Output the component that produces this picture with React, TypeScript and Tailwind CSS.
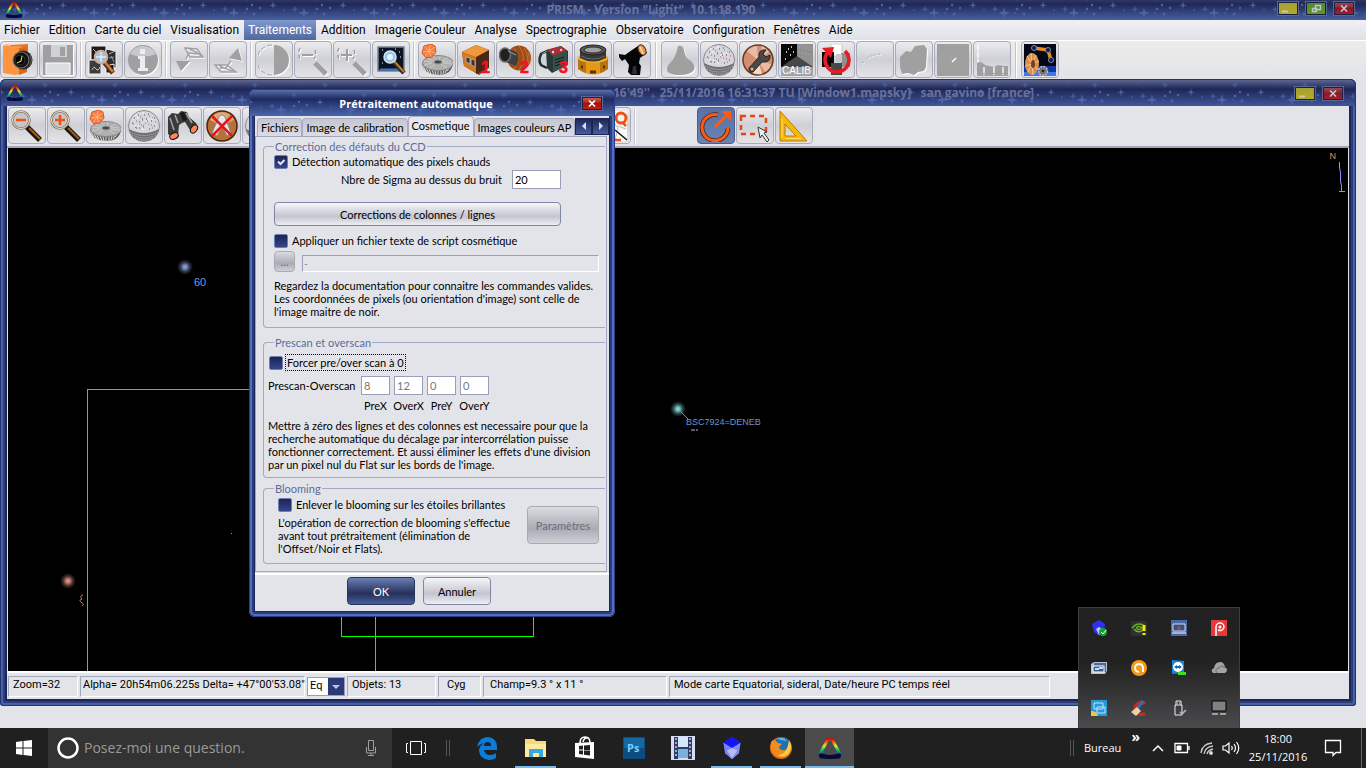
import React, { useState } from "react";
import type { ReactNode } from "react";

const menus = [
  "Fichier", "Edition", "Carte du ciel", "Visualisation", "Traitements", "Addition", "Imagerie Couleur",
  "Analyse", "Spectrographie", "Observatoire", "Configuration", "Fenêtres", "Aide",
];

const GREY = "drop-shadow-[1px_1px_0_#ffffff]";

/* ---------- shared bits ---------- */

function StarField({ id, x = 7, y = 7 }: { id: string; x?: number; y?: number }) {
  return (
    <svg className="pointer-events-none absolute inset-0 h-full w-full" aria-hidden="true">
      <defs>
        <pattern id={id} x={x} y={y - 7} width="70" height="40" patternUnits="userSpaceOnUse">
          <g fill="#4c62a6">
            <path d="M24 14l1 4.500 4.500 1.500-4.500 1.500-1 4.500-1-4.500-4.500-1.500 4.500-1.500z" />
            <path d="M15 12.500l.8 3 3 .8-3 .8-.8 3-.8-3-3-.8 3-.8z" opacity=".8" />
            <path d="M63 8.500l.8 3 3 .8-3 .8-.8 3-.8-3-3-.8 3-.8z" />
            <path d="M37 1l.8 3 3 .8-3 .8-.8 3-.8-3-3-.8 3-.8z" opacity=".8" />
            <circle cx="42" cy="12" r="1.200" />
            <circle cx="37" cy="16" r="1.300" />
            <circle cx="50" cy="15" r="1.200" />
            <circle cx="44" cy="21" r="1.500" />
            <circle cx="35" cy="20" r="1" opacity=".6" />
            <circle cx="4" cy="17" r="1" opacity=".6" />
            <circle cx="56" cy="20" r=".7" opacity=".5" />
            <circle cx="10" cy="4" r=".8" opacity=".6" />
          </g>
        </pattern>
      </defs>
      <rect width="100%" height="100%" fill={`url(#${id})`} />
    </svg>
  );
}

function PrismLogo({ id, className }: { id: string; className: string }) {
  return (
    <svg viewBox="0 0 24 22" className={className} aria-hidden="true">
      <defs>
        <linearGradient id={id} x1="0" y1="0" x2="0" y2="1">
          <stop offset="0" stopColor="#d01010" />
          <stop offset=".2" stopColor="#f07010" />
          <stop offset=".38" stopColor="#e8e820" />
          <stop offset=".58" stopColor="#20c860" />
          <stop offset=".76" stopColor="#1478a0" />
          <stop offset="1" stopColor="#08083c" />
        </linearGradient>
      </defs>
      <path d="M10 2h4l8 15-1 3H3l-1-3z" fill="none" stroke={`url(#${id})`} strokeWidth="3" strokeLinejoin="round" />
      <path d="M3 18.500q9 3 18 0" fill="none" stroke="#070a38" strokeWidth="4" strokeLinecap="round" />
    </svg>
  );
}

function WinButton({ kind, active }: { kind: "min" | "max" | "close"; active?: boolean }) {
  const face =
    kind === "min"
      ? "from-[#a4a03a] to-[#b4ac18]"
      : kind === "max"
        ? "from-[#4c8a3a] to-[#5f9a18]"
        : active
          ? "from-[#c65a50] via-[#a81008] to-[#c02018]"
          : "from-[#94485a] via-[#8c1828] to-[#a02028]";
  const label = kind === "min" ? "Réduire" : kind === "max" ? "Restaurer" : "Fermer";
  return (
    <button aria-label={label} className={`flex h-[13px] w-5 items-center justify-center border border-[#1b2144] bg-linear-to-b outline outline-[#5a6796] ${face}`}>
      <svg viewBox="0 0 18 11" className="h-[11px] w-[18px]" fill="none" stroke={active ? "#fff" : "#c4c4cc"} aria-hidden="true">
        {kind === "min" && <path d="M3 8.500h6" strokeWidth="2" />}
        {kind === "max" && <path d="M8.500 2.500h5v4h-5zM5.500 5.500h4v3h-4z" strokeWidth="1.400" />}
        {kind === "close" && <path d="M6 2.500l6 6M12 2.500l-6 6" strokeWidth="1.700" />}
      </svg>
    </button>
  );
}

function ToolButton({ name, icon, active }: { name: string; icon: ReactNode; active?: boolean }) {
  const face = active
    ? "border-[#4c5c8c] from-[#5870a4] to-[#6c82b0]"
    : "border-[#a9abbb] from-[#ececef] via-[#cfd0d6] to-[#e4e4e8]";
  return (
    <button aria-label={name} className={`flex h-[37px] w-[38px] shrink-0 items-center justify-center rounded border bg-linear-to-b ${face}`}>
      {icon}
    </button>
  );
}

function Sep({ wide }: { wide?: boolean }) {
  return (
    <div className={`flex shrink-0 items-center justify-center ${wide ? "w-2" : "w-1.5"}`}>
      <div className="h-9 w-0.5 border-l border-[#c4c4cc] bg-white" />
    </div>
  );
}

function Ico({ children, className = "" }: { children: ReactNode; className?: string }) {
  return (
    <svg viewBox="1 1 32 32" className={`h-8 w-8 ${className}`} fill="none" aria-hidden="true">
      {children}
    </svg>
  );
}

/* ---------- toolbar drawings ---------- */

const OpenIcon = () => (
  <Ico>
    <path d="M8 2l18-1v24l-14 6z" fill="#e07828" />
    <path d="M1 2l6-1v28l-6-1z" fill="#ffb070" />
    <path d="M1 3h17l3 2v25l-8 2L1 30z" fill="#ff9440" />
    <path d="M17 5v27l8-3V4z" fill="#d86818" />
    <circle cx="21" cy="17" r="9.500" fill="#242424" />
    <circle cx="19" cy="17" r="8" fill="#111" stroke="#707070" strokeWidth="1.200" />
    <circle cx="18" cy="17" r="5" fill="#000" stroke="#383838" />
    <path d="M15 20l4-2 1-5" stroke="#c8d060" strokeWidth="1.200" />
    <path d="M28 11q3 6 0 12" stroke="#666" />
  </Ico>
);

const SaveIcon = () => (
  <Ico className={GREY}>
    <path d="M2 2h30v30H2z" fill="#a0a0a0" />
    <path d="M10 2h16v12H10z" fill="#d0d1d6" />
    <path d="M19 4h5v9h-5z" fill="#a0a0a0" />
    <path d="M5 20h24v11H5z" fill="#dcdde1" stroke="#fff" />
  </Ico>
);

const ImagesIcon = () => (
  <Ico>
    <path d="M4 3h15v14H4z" fill="#1c1c1c" stroke="#f4f4f4" />
    <path d="M19 6l10 2v17H18z" fill="#2c2c2c" stroke="#f4f4f4" />
    <path d="M2 17h12v14H2z" fill="#3c3c3c" stroke="#f4f4f4" />
    <path d="M19 23l8-2v9h-8z" fill="#111" stroke="#f4f4f4" />
    <path d="M5 27q2-5 4-1 2 3 4-2M6 6l4 4M22 11l6-3" stroke="#bbb" />
    <path d="M24 13l3 6M22 15l5-1" stroke="#999" />
    <path d="M17 19l9 11" stroke="#432" strokeWidth="5" />
    <path d="M17 18l9 11" stroke="#e47a20" strokeWidth="2.500" />
    <circle cx="14" cy="14" r="6.500" fill="#a8bdd6" stroke="#d8a888" strokeWidth="1.500" />
    <path d="M14 9v10M9 14h10" stroke="#fff" />
  </Ico>
);

const InfoIcon = () => (
  <Ico className={GREY}>
    <circle cx="17" cy="17" r="15" fill="#a0a0a0" />
    <path d="M4 11Q8 3 17 3t13 8q-13 5-26 0z" fill="#c8c9cd" />
    <path d="M14 6h5v5h-5zM12 13h7v12h3v3H12v-3h2v-9h-2z" fill="#eee" />
  </Ico>
);

const ShiftDownIcon = () => (
  <Ico className={GREY}>
    <path d="M4 18h14l-9 10z" fill="#a0a0a0" />
    <path d="M13 5l12 1 6 8H18z" stroke="#a0a0a0" strokeWidth="1.500" />
    <path d="M16 5q6 3 14 8M14 16l3-6 8 1" stroke="#a0a0a0" strokeWidth="1.500" />
  </Ico>
);

const ShiftUpIcon = () => (
  <Ico className={GREY}>
    <path d="M18 15L27 5l4 13z" fill="#a0a0a0" />
    <path d="M4 22h12l9 7H10z" stroke="#a0a0a0" strokeWidth="1.500" />
    <path d="M8 22q5 4 14 6M20 18l-5 7H9" stroke="#a0a0a0" strokeWidth="1.500" />
  </Ico>
);

const ContrastIcon = () => (
  <Ico className={GREY}>
    <path d="M17 2a15 15 0 010 30z" fill="#a0a0a0" />
    <path d="M15 2A15 15 0 0015 32" stroke="#a0a0a0" strokeDasharray="5 2" />
  </Ico>
);

const GreyZoomIcon = ({ plus }: { plus?: boolean }) => (
  <Ico className={GREY}>
    <path d="M19 20l11 11" stroke="#a0a0a0" strokeWidth="5" />
    <path d="M6 12h11" stroke="#a0a0a0" strokeWidth="2" />
    {plus && <path d="M12 6v12" stroke="#a0a0a0" strokeWidth="2" />}
    <path d="M4 5q-3 6 1 13M19 7q2 5-1 9" stroke="#a0a0a0" strokeWidth="1.500" strokeDasharray="4 3" />
  </Ico>
);

const SkyZoomIcon = () => (
  <Ico>
    <path d="M4 4h26v24H4z" fill="#0a1424" stroke="#7a8494" strokeWidth="1.500" />
    <path d="M6 26.500h22" stroke="#3c78c8" strokeWidth="2" />
    <path d="M19 18l11 12" stroke="#302820" strokeWidth="4.500" />
    <path d="M19 17l11 12" stroke="#c87828" strokeWidth="2" />
    <circle cx="16" cy="14" r="6" fill="#8cc4f8" stroke="#dce4ec" strokeWidth="1.500" />
    <circle cx="16" cy="14" r="3" fill="#e8f6ff" />
    <path d="M25 9h1M8 7h1M21 6h1M8 20h1M26 14h1" stroke="#fff" />
  </Ico>
);

const GearsIcon = () => (
  <Ico>
    <path d="M2 20q1 11 16 12 14 0 15-12z" fill="#5c5c5c" />
    <path d="M3 23l3 5M6 25l3 5M9 26l2 5M12 27l2 5M15 28l1 4M18 28v4M21 28v4M24 27l-1 4M27 26l-2 4M30 24l-3 4" stroke="#d8d8d8" />
    <ellipse cx="18" cy="20" rx="15.500" ry="7.500" fill="#b0b0b0" stroke="#8a8a8a" />
    <path d="M4 18l8 1M7 15l7 3M13 13l3 4M20 13l-1 4M28 15l-6 3M31 18l-8 1M32 21l-9-1M27 25l-6-4M10 25l5-4M4 22l8-2" stroke="#cacaca" />
    <ellipse cx="18" cy="19" rx="4" ry="2" fill="#484848" stroke="#999" />
    <path d="M4 3l7-2 4 2 1 6-4 5-6 1-4-5z" fill="#f87c40" />
    <path d="M9 8L4 3M9 8l1-6M9 8l6-4M9 8l6 2M9 8l2 6M9 8l-4 6M9 8L3 9" stroke="#ffb088" />
    <path d="M4 3l7-2 4 2 1 6-4 5-6 1-4-5z" stroke="#d05c24" />
  </Ico>
);

const DigitIcon = ({ n }: { n: number }) => (
  <Ico>
    {n === 1 && (
      <g>
        <path d="M3 9l14-7 13 5v18l-10 7-15-9z" fill="#8a3d0c" />
        <path d="M3 9l14 5v16L5 23z" fill="#d47820" />
        <path d="M17 14l13-7v17l-13 7z" fill="#452818" />
        <path d="M3 9l14-7 13 5-13 7z" fill="#f0983c" />
        <path d="M7 14l4 1v6l-4-2zM12 16l4 1v7l-4-2z" fill="#333" stroke="#b8a898" />
      </g>
    )}
    {n === 2 && (
      <g>
        <ellipse cx="21" cy="15" rx="12" ry="12.500" fill="#a04c18" />
        <path d="M21 3q9 12 0 24M26 5q7 10 0 21M16 5q8 10 0 21M30 9q3 7 0 13" stroke="#c8702c" />
        <path d="M7 5l12 4q3 8-1 14L5 18z" fill="#404040" />
        <ellipse cx="7" cy="12" rx="5.500" ry="7" fill="#202020" stroke="#6c6c6c" strokeWidth="1.500" />
        <path d="M10 8l8 4" stroke="#999" />
      </g>
    )}
    {n === 3 && (
      <g>
        <path d="M9 7l15-4 7 5v14l-16 8-5-5z" fill="#283838" />
        <path d="M10 7l14-4 6 5-14 5z" fill="#a83038" />
        <path d="M16 13l14-5v14l-14 7z" fill="#36504a" />
        <path d="M18 17l9-3M18 20l9-3M18 23l9-3" stroke="#101818" />
        <path d="M10 8L4 11q-3 7 0 11l6 3" stroke="#1c3030" strokeWidth="2.500" />
        <path d="M10 8L5 11" stroke="#78a098" />
        <circle cx="16" cy="9" r="1.200" fill="#f4d0d0" />
        <circle cx="24" cy="7" r="1.200" fill="#f4d0d0" />
      </g>
    )}
    <text x="22" y="30" className="font-[Liberation_Sans] text-[16px] font-bold" fill="#f81020" stroke="#f81020" strokeWidth=".6">
      {n}
    </text>
  </Ico>
);

const FocuserIcon = () => (
  <Ico>
    <path d="M2 15v11q15 11 30 0V15z" fill="#e49a18" />
    <path d="M2 15v11q4 3 8 4V18zM32 15v11q-4 3-8 4V18z" fill="#b87410" />
    <ellipse cx="17" cy="15" rx="15" ry="5" fill="#f0ac28" />
    <path d="M4 7v8q13 7 26 0V7z" fill="#383838" />
    <ellipse cx="17" cy="7" rx="13" ry="5" fill="#585858" stroke="#222" />
    <ellipse cx="17" cy="7" rx="9" ry="3" fill="#a0a0a0" stroke="#303030" />
    <path d="M5 13q12 6 24 0" stroke="#666" />
    <path d="M5 24h2M27 24h2M14 29h6" stroke="#583400" strokeWidth="3" />
  </Ico>
);

const TelescopeIcon = () => (
  <Ico>
    <path d="M4 11l6 1 7-5 6-4 5-1 4 8-7 5-1 5 2 3-1 9h-9l-3-3 1-7-4-6-3 2-3-4z" fill="#050505" />
    <path d="M17 31l1-8h3l1 8z" fill="#303030" />
    <ellipse cx="27" cy="7" rx="3.500" ry="5.500" transform="rotate(-28 27 7)" fill="#e89848" stroke="#442c18" />
    <path d="M25 4l3 7" stroke="#ffe0b0" strokeWidth="1.500" />
  </Ico>
);

const FlaskIcon = () => (
  <Ico className={GREY}>
    <path d="M15 3q5-1 6 4 1 8 7 11 5 4 3 9-3 5-14 5Q4 32 4 26q0-4 5-8 4-5 6-15z" fill="#a0a0a0" />
  </Ico>
);

const DomeIcon = () => (
  <Ico>
    <circle cx="17" cy="17" r="15.500" fill="#d6d6dc" stroke="#8a8a90" />
    <path d="M2 20q15 8 30 0-2 12-15 12T2 20z" fill="#707070" />
    <path d="M3 23q14 7 28 0M5 26q12 6 24 0M8 29q9 4 18 0" stroke="#c0c0c0" strokeDasharray="1 1" />
    <path d="M7 9h1m4 4h1m4-7h1m6 6h1m-9 5h1m-9 1h1m18-1h1m-8-5h1m-6-2h1m-4 9h1M11 6h1m9-1h1M5 14h1m13-4h1m7-1h1M9 19h1m12 1h1" stroke="#484868" />
    <path d="M9 12h1m8 2h1m6-5h1m-13-1h1m2 11h1m7-3h1M12 16h1m15-3h1" stroke="#c05050" />
    <path d="M6 15h1m15-8h1m-9 9h1m10 3h1M15 11h1m5 4h1" stroke="#38a058" />
    <path d="M10 9h2m3-5h2m4 7h2m-5 1h2m-9 5h2m11-7h2m-19 7h2M8 6h2m5 14h2" stroke="#fafafa" />
  </Ico>
);

const WrenchIcon = () => (
  <Ico>
    <circle cx="17" cy="17" r="15" fill="#d09070" stroke="#6a3a22" strokeWidth="1.500" />
    <path d="M17 17L6 8a14 14 0 0110-5zM17 17l4-14a14 14 0 017 6zM17 17l13 4a14 14 0 01-6 8z" fill="#e8bca4" />
    <path d="M17 17l4 14a14 14 0 01-9-1z" fill="#f4d8c8" />
    <path d="M8 25L18 14q-1-8 7-7l-3 4 3 3 4-2q1 8-8 7L12 29q-4 1-4-4z" fill="#484848" stroke="#242424" />
    <circle cx="11" cy="26" r="1.500" fill="#e2b090" />
  </Ico>
);

const CalibIcon = () => (
  <Ico>
    <path d="M1 1h32v32H1z" fill="#8c8c8c" />
    <path d="M1 1h16v16L1 25z" fill="#080808" />
    <path d="M17 1h16v22L17 15z" fill="#909090" />
    <path d="M1 24l16-11 16 11z" fill="#484848" />
    <path d="M1 24h32v9H1z" fill="#a4a4a8" />
    <path d="M6 9h1M11 4h1M10 12h1M5 16h1M13 9h1M8 6h1" stroke="#fff" strokeWidth="1.300" />
    <path d="M19 4l12 3M19 9l12 3M19 13l12 4M21 2l10 3" stroke="#b4b4b4" strokeDasharray="1 2" />
    <text x="2" y="31" className="font-[Liberation_Sans] text-[10px]" fill="#fff">CALIB</text>
  </Ico>
);

const RotateIcon = () => (
  <Ico>
    <path d="M12 1h11v12H12z" fill="#fff" stroke="#ccc" />
    <path d="M3 9h12v15H3z" fill="#080808" />
    <path d="M22 10h9v14h-9z" fill="#909090" />
    <path d="M12 20h11v12H12z" fill="#484848" />
    <path d="M17 11h6v8h-6z" fill="#c8c8c8" />
    <path d="M26 8a12 12 0 11-17 1" stroke="#e81c24" strokeWidth="3.500" />
    <path d="M3 5l12-1-3 11z" fill="#e81c24" />
  </Ico>
);

const CurveIcon = () => (
  <Ico className={GREY}>
    <path d="M4 20l2-1M9 15q7-4 15-4" stroke="#a8a8a8" strokeDasharray="2 2" />
  </Ico>
);

const BlobIcon = () => (
  <Ico className={GREY}>
    <path d="M3 14l6-6 5 1 4-6 9-1 3 4-1 18-2 4-6 1-4 3-6-2-6 1-2-7z" fill="#a0a0a0" />
  </Ico>
);

const PlateIcon = () => (
  <Ico>
    <path d="M1 1h32v32H1z" fill="#a0a0a0" />
    <path d="M16 19l4-4" stroke="#fff" strokeWidth="1.500" />
  </Ico>
);

const HistoIcon = () => (
  <Ico>
    <path d="M2 33V20l4-1 4 3 4 1 5 1 4-2 5 1h5v10z" fill="#a0a0a0" />
    <path d="M3 2v17M9 24v8M19 24v8M28 24v8" stroke="#fff" strokeWidth="1.300" strokeDasharray="6 1" />
  </Ico>
);

const RobotIcon = () => (
  <Ico>
    <path d="M1 1h32v32H1z" fill="#040814" />
    <path d="M1 23h32v10H1z" fill="#1434a0" />
    <path d="M1 29h32v4H1z" fill="#4078f0" />
    <path d="M11 5l14 2 3 10" stroke="#e88820" strokeWidth="3.500" />
    <circle cx="11" cy="5" r="2.500" fill="#101838" stroke="#788cc8" />
    <circle cx="25" cy="7" r="2.500" fill="#101838" stroke="#788cc8" />
    <circle cx="28" cy="17" r="2.500" fill="#101838" stroke="#788cc8" />
    <ellipse cx="9" cy="21" rx="7" ry="11" fill="#d89050" />
    <path d="M9 21L4 13M9 21l-1-11M9 21l4-9M9 21l7-3M9 21l6 6M9 21l1 11M9 21l-4 8M9 21l-7 2" stroke="#f4c890" />
    <ellipse cx="10" cy="21" rx="2" ry="4" fill="#784010" />
    <circle cx="20" cy="28" r="4.500" fill="#777" stroke="#c4c4c4" strokeWidth="1.500" strokeDasharray="2 1" />
    <circle cx="20" cy="28" r="1.300" fill="#222" />
  </Ico>
);

const LensIcon = ({ plus }: { plus?: boolean }) => (
  <Ico>
    <path d="M17 18l13 13" stroke="#181410" strokeWidth="5.500" />
    <path d="M19 19l11 11" stroke="#a85c14" strokeWidth="2" />
    <circle cx="11" cy="11" r="8.500" fill="#c6c6ca" stroke="#807464" strokeWidth="2.500" />
    <circle cx="11" cy="11" r="8.500" stroke="#ece4d0" />
    <path d="M6 11h10" stroke="#f05010" strokeWidth="2.500" />
    {plus && <path d="M11 6v10" stroke="#f05010" strokeWidth="2.500" />}
  </Ico>
);

const BinocularsIcon = () => (
  <Ico>
    <path d="M2 8l4-4 6 1 3-3 6 1 2 5 7 6q3 4-1 8l-5-1-5-8-3 1-3 2-1 11-5 2-5-4z" fill="#3a3a3a" />
    <path d="M4 9l4 12M9 6l3 8M20 4l6 10" stroke="#a4a4a4" strokeWidth="1.500" />
    <path d="M14 4l3 8 4-1-3-8z" fill="#181818" />
    <ellipse cx="8" cy="27" rx="4.500" ry="3" transform="rotate(-25 8 27)" fill="#ff8458" stroke="#111" />
    <ellipse cx="28" cy="20" rx="3" ry="4.500" transform="rotate(35 28 20)" fill="#ff8458" stroke="#111" />
  </Ico>
);

const NoCompassIcon = () => (
  <Ico>
    <circle cx="17" cy="17" r="15" fill="#b87038" stroke="#4a240c" strokeWidth="1.500" />
    <path d="M17 17L5 11q4-8 12-8t12 8z" fill="#dca878" />
    <path d="M14 8q3-4 6 0l6 16-4 3-5-10-5 10-5-3z" fill="#e4e8ee" stroke="#8a8a90" />
    <path d="M7 7l20 20M27 7L7 27" stroke="#e81418" strokeWidth="2.500" />
  </Ico>
);

const CatalogIcon = () => (
  <Ico>
    <path d="M4 2h28v30H4z" fill="#f8f8f8" />
    <path d="M20 3l-3 8 6 8-3 12M23 17l8 3" stroke="#bbb" />
    <circle cx="26" cy="9" r="5" fill="#f4f4f4" stroke="#f05010" strokeWidth="3" />
    <path d="M28 14l3 3M14 31h12" stroke="#f05010" strokeWidth="2.500" />
    <path d="M20 21l12 10" stroke="#111" strokeWidth="1.500" />
  </Ico>
);

const OrientIcon = () => (
  <Ico>
    <path d="M19 6A13 13 0 1029 19" stroke="#402014" strokeWidth="4.500" />
    <path d="M19 6A13 13 0 1029 19" stroke="#ff5a14" strokeWidth="3" />
    <path d="M16 18L27 7" stroke="#ff5a14" strokeWidth="3" />
    <path d="M22 2h10v10z" fill="#ff5a14" />
  </Ico>
);

const SelectIcon = () => (
  <Ico>
    <path d="M3 7h25v18H3z" stroke="#e04818" strokeWidth="2.500" strokeDasharray="5 4" />
    <path d="M20 18l9 5-3 1 5 7-2 2-5-7-2 3z" fill="#eee" stroke="#333" />
  </Ico>
);

const SquareIcon = () => (
  <Ico>
    <path d="M3 2v30h27zM8 15v12h11z" fill="#f8b808" stroke="#b87c08" fillRule="evenodd" />
    <path d="M5 9v20M8 29.500h16" stroke="#ffdc60" />
  </Ico>
);

const mainTools: { name: string; icon: ReactNode }[][] = [
  [{ name: "Ouvrir", icon: <OpenIcon /> }, { name: "Enregistrer", icon: <SaveIcon /> }],
  [{ name: "Images", icon: <ImagesIcon /> }, { name: "Informations", icon: <InfoIcon /> }],
  [{ name: "Seuil bas", icon: <ShiftDownIcon /> }, { name: "Seuil haut", icon: <ShiftUpIcon /> }],
  [
    { name: "Contraste", icon: <ContrastIcon /> },
    { name: "Zoom arrière", icon: <GreyZoomIcon /> },
    { name: "Zoom avant", icon: <GreyZoomIcon plus /> },
    { name: "Loupe", icon: <SkyZoomIcon /> },
  ],
  [
    { name: "Télescope", icon: <GearsIcon /> },
    { name: "Caméra 1", icon: <DigitIcon n={1} /> },
    { name: "Caméra 2", icon: <DigitIcon n={2} /> },
    { name: "Caméra 3", icon: <DigitIcon n={3} /> },
    { name: "Focuseur", icon: <FocuserIcon /> },
    { name: "Observation", icon: <TelescopeIcon /> },
  ],
  [
    { name: "Analyse", icon: <FlaskIcon /> },
    { name: "Coupole", icon: <DomeIcon /> },
    { name: "Réglages", icon: <WrenchIcon /> },
    { name: "Calibration", icon: <CalibIcon /> },
    { name: "Rotation", icon: <RotateIcon /> },
    { name: "Courbe", icon: <CurveIcon /> },
    { name: "Relief", icon: <BlobIcon /> },
    { name: "Astrométrie", icon: <PlateIcon /> },
    { name: "Histogramme", icon: <HistoIcon /> },
  ],
  [{ name: "Automate", icon: <RobotIcon /> }],
];

const mapTools: { name: string; icon: ReactNode }[] = [
  { name: "Dézoomer", icon: <LensIcon /> },
  { name: "Zoomer", icon: <LensIcon plus /> },
  { name: "Pointer", icon: <GearsIcon /> },
  { name: "Coupole carte", icon: <DomeIcon /> },
  { name: "Rechercher", icon: <BinocularsIcon /> },
  { name: "Sans compas", icon: <NoCompassIcon /> },
  { name: "Dôme", icon: <DomeIcon /> },
  { name: "Outil 8", icon: null },
  { name: "Outil 9", icon: null },
  { name: "Outil 10", icon: null },
  { name: "Outil 11", icon: null },
  { name: "Outil 12", icon: null },
  { name: "Outil 13", icon: null },
  { name: "Outil 14", icon: null },
  { name: "Outil 15", icon: null },
  { name: "Catalogue", icon: <CatalogIcon /> },
];

/* ---------- sky map window ---------- */

function Star({ id, x, y, color }: { id: string; x: number; y: number; color: string }) {
  return (
    <g>
      <defs>
        <radialGradient id={id}>
          <stop offset="0" stopColor={color} />
          <stop offset=".25" stopColor={color} stopOpacity=".8" />
          <stop offset=".6" stopColor={color} stopOpacity=".3" />
          <stop offset="1" stopColor={color} stopOpacity="0" />
        </radialGradient>
      </defs>
      <circle cx={x} cy={y} r="8" fill={`url(#${id})`} />
    </g>
  );
}

function SkyMap() {
  return (
    <div className="relative min-h-0 flex-1 overflow-hidden bg-black font-[Liberation_Sans]">
      <svg className="absolute inset-0 h-full w-full" aria-hidden="true">
        <g stroke="#00ff00" fill="none" shapeRendering="crispEdges">
          <path d="M79.500 600V241.500H500" />
          <path d="M333.500 400V488.500H525.500V400M367.500 400V600" />
          <path d="M223 385.500h1" />
        </g>
        <Star id="s60" x={177} y={119} color="#90a8e8" />
        <Star id="sdeneb" x={670} y={261} color="#90e4e4" />
        <Star id="sred" x={60} y={433} color="#f09c94" />
        <path d="M672 263l8 8" stroke="#5c8cc0" />
        <path d="M683 282h4m1 0h2" stroke="#bbb" />
        <path d="M75 447q-4 1-1 4-4 1 0 4 3 1 0 3" stroke="#d08060" fill="none" />
      </svg>
      <span className="absolute top-[126px] left-[186px] text-[11px] text-[#6f9cf0]">60</span>
      <span className="absolute top-[268px] left-[678px] text-[9px] text-[#6c94cc]">BSC7924=DENEB</span>
      <span className="absolute top-0.5 right-3 text-[9px] text-[#e08c58]">N</span>
      <svg viewBox="0 0 8 32" className="absolute top-3.5 right-0.5 h-8 w-2" stroke="#9090ff" fill="none" aria-hidden="true">
        <path d="M1.500 0v5l1 6v8l1 5v5M1 29.500h6" />
      </svg>
    </div>
  );
}

function StatusPanel({ className, children }: { className: string; children: ReactNode }) {
  return (
    <div className={`h-[21px] shrink-0 border border-t-[#a2a8bc] border-r-white border-b-white border-l-[#a2a8bc] leading-4 whitespace-nowrap ${className}`}>
      {children}
    </div>
  );
}

function MapWindow() {
  return (
    <section className="mr-2.5 mb-[22px] flex min-h-0 flex-1 flex-col rounded-t-md rounded-b bg-[#1d2658] px-[7px] pb-[7px] shadow-[inset_0_0_0_1px_#24336e,inset_0_0_0_3px_#4661a5,inset_0_0_0_5px_#2c3c7c]">
      <header className="relative -mx-[6px] mt-px flex h-[26px] shrink-0 items-center rounded-t-md bg-linear-to-b from-[#5d658f] via-[#1f2757] via-35% to-[#40579a]">
        <StarField id="stars-map" />
        <PrismLogo id="logo-map" className="relative ml-1 h-4 w-5" />
        <h2 className="relative flex-1 pl-[588px] text-xs font-bold whitespace-pre text-[#68719a]">
          16'49''   25/11/2016 16:31:37 TU [Window1.mapsky]   san gavino [france]
        </h2>
        <div className="relative mr-3 flex gap-2">
          <WinButton kind="min" />
          <WinButton kind="close" />
        </div>
      </header>
      <div className="flex h-[42px] shrink-0 gap-px border-b-2 border-b-[#a4a4b8] bg-[#e3e4e9] pt-px pl-px">
        {mapTools.map((t) => (
          <ToolButton key={t.name} name={t.name} icon={t.icon} />
        ))}
        <Sep />
        <div className="w-[57px]" />
        <ToolButton name="Orientation" icon={<OrientIcon />} active />
        <ToolButton name="Sélection" icon={<SelectIcon />} />
        <ToolButton name="Mesure" icon={<SquareIcon />} />
      </div>
      <div className="flex min-h-0 flex-1 bg-[#e3e4e9] px-px">
        <SkyMap />
      </div>
      <footer className="flex h-7 shrink-0 items-center gap-0.5 border-t-2 border-white bg-[#e3e4e9] pl-px font-[Roboto] text-[11px] text-black">
        <StatusPanel className="w-[70px] pl-1">Zoom=32</StatusPanel>
        <StatusPanel className="w-[225px] pl-0.5">Alpha= 20h54m06.225s Delta= +47°00'53.08"</StatusPanel>
        <div className="relative h-[19px] w-[38px] shrink-0">
          <select aria-label="Coordonnées" className="h-full w-full appearance-none border border-[#9a9cb8] bg-white pl-0.5">
            <option>Eq</option>
          </select>
          <svg viewBox="0 0 16 17" className="pointer-events-none absolute top-px right-px h-[17px] w-4" aria-hidden="true">
            <path d="M0 0h16v17H0z" fill="#2c3b78" />
            <path d="M4 7h8l-4 4z" fill="#b8c4e8" />
          </svg>
        </div>
        <StatusPanel className="w-[89px] pl-1">Objets: 13</StatusPanel>
        <StatusPanel className="w-[43px] pl-2">Cyg</StatusPanel>
        <StatusPanel className="w-[184px] pl-1.5">Champ=9.3 ° x 11 °</StatusPanel>
        <StatusPanel className="w-[381px] pl-1">Mode carte Equatorial, sideral, Date/heure PC temps réel</StatusPanel>
      </footer>
    </section>
  );
}

/* ---------- dialog ---------- */

function Check({ label, checked, focused }: { label: string; checked?: boolean; focused?: boolean }) {
  return (
    <label className="flex w-max items-center gap-[3px]">
      <span className="relative block h-3.5 w-3.5">
        <input
          type="checkbox"
          defaultChecked={checked}
          className="peer block h-3.5 w-3.5 appearance-none rounded-xs border border-[#6f7fb4] bg-linear-to-b from-[#1c2552] to-[#34458c]"
        />
        <svg viewBox="0 0 14 14" className="pointer-events-none absolute inset-0 hidden h-3.5 w-3.5 peer-checked:block" fill="none" stroke="#dfe6ff" strokeWidth="2" aria-hidden="true">
          <path d="M4 6.500l2.500 2.500L10.500 5" />
        </svg>
      </span>
      <span className={`px-px leading-[15px] ${focused ? "outline-1 outline-black outline-dotted" : ""}`}>{label}</span>
    </label>
  );
}

function PushButton({ children, className, primary, disabled }: { children: ReactNode; className: string; primary?: boolean; disabled?: boolean }) {
  const face = primary
    ? "border-[#28335f] from-[#6a80b4] via-[#27305a] to-[#46609c] text-white"
    : disabled
      ? "border-[#a8aab4] from-[#dcdde0] via-[#a9abb6] to-[#cfd0d6] text-[#6c6e78]"
      : "border-[#7e86a4] from-[#f6f6f8] via-[#c3c5d0] to-[#eceef2] text-black";
  return (
    <button disabled={disabled} className={`rounded border bg-linear-to-b via-60% ${face} ${className}`}>
      {children}
    </button>
  );
}

const overscans = [
  { name: "PreX", value: "8" },
  { name: "OverX", value: "12" },
  { name: "PreY", value: "0" },
  { name: "OverY", value: "0" },
];

const box = "min-w-0 rounded-l border border-r-0 border-[#a0a9c6]";
const legend = "px-px leading-[13px] text-[#5b6c9a]";

function Dialog() {
  const [tab, setTab] = useState("Cosmetique");
  const tabs = ["Fichiers", "Image de calibration", "Cosmetique", "Images couleurs AP"];

  return (
    <div
      role="dialog"
      aria-label="Prétraitement automatique"
      className="absolute top-[89px] left-[249px] flex w-[366px] flex-col rounded-md bg-[#1d2658] px-1.5 pb-1.5 font-[Lato] text-[11px] leading-[13px] text-black shadow-[inset_0_0_0_1px_#2a3d84,inset_0_0_0_3px_#4f70bc,inset_0_0_0_5px_#2c3c7c]"
    >
      <header className="relative -mx-[5px] mt-px flex h-[26px] items-center rounded-t-md bg-linear-to-b from-[#5b6fa8] via-[#1f2a60] via-35% to-[#4a66ac]">
        <StarField id="stars-dialog" />
        <h1 className="relative flex-1 text-center font-[Open_Sans] text-[11px] font-bold text-white">Prétraitement automatique</h1>
        <div className="relative mr-3">
          <WinButton kind="close" active />
        </div>
      </header>

      <div className="bg-[#e3e4e9]">
        <div role="tablist" className="flex h-5 items-end overflow-hidden pl-0.5">
          {tabs.map((t) => (
            <button
              key={t}
              role="tab"
              aria-selected={t === tab}
              onClick={() => setTab(t)}
              className={`min-w-0 rounded-t border border-b-0 border-[#a9abc0] pl-[3px] whitespace-nowrap ${
                t === tab ? "h-5 bg-[#e6e7ec] pb-0.5" : "h-[18px] bg-linear-to-b from-[#c4c6d0] to-[#dcdde3]"
              } ${t === "Images couleurs AP" ? "flex-1 text-left" : "shrink-0 pr-[3px]"}`}
            >
              {t}
            </button>
          ))}
          <button aria-label="Onglet précédent" className="flex h-[17px] w-[17px] shrink-0 items-center justify-center self-center border border-[#1c2450] bg-linear-to-b from-[#1f2858] to-[#465c9c]">
            <svg viewBox="0 0 8 8" className="h-2 w-2" fill="#d8e0ff" aria-hidden="true"><path d="M6 0v8L2 4z" /></svg>
          </button>
          <button aria-label="Onglet suivant" className="flex h-[17px] w-[17px] shrink-0 items-center justify-center self-center border border-[#1c2450] bg-linear-to-b from-[#1f2858] to-[#465c9c]">
            <svg viewBox="0 0 8 8" className="h-2 w-2" fill="#d8e0ff" aria-hidden="true"><path d="M2 0v8l4-4z" /></svg>
          </button>
        </div>

        <div className="mr-0.5 flex flex-col gap-2 border border-[#a0a6c0] pt-[3px] pr-px pb-[7px] pl-[7px]">
          <fieldset className={`${box} h-[188px] px-2.5`}>
            <legend className={legend}>Correction des défauts du CCD</legend>
            <div className="mt-px">
              <Check label="Détection automatique des pixels chauds" checked />
            </div>
            <label className="mt-px ml-[67px] flex items-center gap-2.5">
              Nbre de Sigma au dessus du bruit
              <input defaultValue="20" className="h-[19px] w-[49px] border border-[#9a9cb8] bg-white px-0.5" />
            </label>
            <PushButton className="mt-[13px] block h-6 w-[287px]">Corrections de colonnes / lignes</PushButton>
            <div className="mt-[7px]">
              <Check label="Appliquer un fichier texte de script cosmétique" />
            </div>
            <div className="mt-[3px] -mr-1 flex items-end gap-[7px]">
              <PushButton disabled className="h-[21px] w-[21px]">...</PushButton>
              <input
                disabled
                aria-label="Fichier de script"
                defaultValue="-"
                className="h-[17px] min-w-0 flex-1 border border-t-[#9a9fb8] border-r-white border-b-white border-l-[#9a9fb8] bg-transparent px-px text-[#8a8ea0]"
              />
            </div>
            <p className="mt-[7px] whitespace-nowrap">
              Regardez la documentation pour connaitre les commandes valides.<br />
              Les coordonnées de pixels (ou orientation d'image) sont celle de<br />
              l'image maitre de noir.
            </p>
          </fieldset>

          <fieldset className={`${box} h-[142px] px-1`}>
            <legend className={`ml-1.5 ${legend}`}>Prescan et overscan</legend>
            <div className="mt-1.5 ml-px">
              <Check label="Forcer pre/over scan à 0" focused />
            </div>
            <div className="mt-1.5 flex">
              <span className="w-[93px] leading-[19px] whitespace-nowrap">Prescan-Overscan</span>
              <div className="flex gap-1">
                {overscans.map((o) => (
                  <label key={o.name} className="flex w-[29px] flex-col-reverse items-center gap-1">
                    {o.name}
                    <input disabled defaultValue={o.value} className="h-[19px] w-[29px] border border-[#9a9cb8] bg-white px-0.5 text-[#777]" />
                  </label>
                ))}
              </div>
            </div>
            <p className="mt-[7px] whitespace-nowrap">
              Mettre à zéro des lignes et des colonnes est necessaire pour que la<br />
              recherche automatique du décalage par intercorrélation puisse<br />
              fonctionner correctement. Et aussi éliminer les effets d'une division<br />
              par un pixel nul du Flat sur les bords de l'image.
            </p>
          </fieldset>

          <fieldset className={`${box} -mt-1 h-[82px] px-3.5`}>
            <legend className={`-ml-1 ${legend}`}>Blooming</legend>
            <div className="flex items-center justify-between">
              <div>
                <div className="mt-0.5">
                  <Check label="Enlever le blooming sur les étoiles brillantes" />
                </div>
                <p className="mt-1">
                  L'opération de correction de blooming s'effectue<br />
                  avant tout prétraitement (élimination de<br />
                  l'Offset/Noir et Flats).
                </p>
              </div>
              <PushButton disabled className="-mr-2 h-[38px] w-[72px]">Paramètres</PushButton>
            </div>
          </fieldset>
        </div>

        <div className="mt-px flex h-[38px] items-start justify-center gap-2 border-t-2 border-white pt-0.5 pr-[26px]">
          <PushButton primary className="h-7 w-[68px]">OK</PushButton>
          <PushButton className="h-7 w-[68px]">Annuler</PushButton>
        </div>
      </div>
    </div>
  );
}

/* ---------- desktop shell ---------- */

const Gem = ({ className }: { className: string }) => (
  <svg viewBox="0 0 24 28" className={className} aria-hidden="true">
    <path d="M12 1l10 7-2 12-8 7-8-7L2 8z" fill="#3038e8" />
    <path d="M12 1l10 7-10 6L2 8z" fill="#1414f8" />
    <path d="M12 14v13l-8-7L2 8z" fill="#7c84f0" />
    <path d="M12 14v13l8-7 2-12z" fill="#a8b0f4" opacity=".7" />
    <path d="M12 14l6 3-6 9-6-9z" fill="#d8dcfa" opacity=".6" />
  </svg>
);

const trayIcons: { name: string; icon: ReactNode }[] = [
  {
    name: "Gem",
    icon: <><path d="M8 0l6 4-1 8-5 4-5-4-2-8z" fill="#3030f0" /><path d="M8 7l3 2-3 6-3-6z" fill="#c0c8fa" /><circle cx="12" cy="12" r="4" fill="#18a038" /><path d="M10 12l2 2 3-4" stroke="#fff" fill="none" /></>,
  },
  {
    name: "Nvidia",
    icon: <><path d="M0 1h16v15H0z" fill="#2c3038" /><path d="M1 8q6-7 13-2M3 9q4 5 9 1M5 8q3-3 6 0-3 3-6 0" stroke="#70b018" strokeWidth="1.500" fill="none" /><path d="M13 5v6M13 13v2" stroke="#f8e800" strokeWidth="3" /></>,
  },
  {
    name: "Ecran",
    icon: <><path d="M0 0h16v16H0z" fill="#4868a8" /><path d="M2 4h12v7H2z" fill="#385080" stroke="#d0dcf0" /><path d="M1 13h14" stroke="#c0cce0" strokeWidth="1.500" /><path d="M6 8h4M8 6v4" stroke="#c05050" /></>,
  },
  {
    name: "PicPick",
    icon: <><path d="M0 0h16v16H0z" fill="#e83838" /><path d="M5 16V7a4 4 0 118 0 4 4 0 01-6 3" stroke="#fff" strokeWidth="1.500" fill="none" /><circle cx="9" cy="7" r="1.500" fill="#fff" /></>,
  },
  {
    name: "Fenêtres",
    icon: <><path d="M0 4l3-2h13v9l-2 3H0z" fill="#b8c0cc" /><path d="M3 3h12v9H3z" fill="#486ca8" /><path d="M2 6h11v6H2z" fill="#3c5c94" stroke="#fff" /><path d="M4 9h4M8 8h4" stroke="#fff" strokeWidth="1.500" /></>,
  },
  {
    name: "Avast",
    icon: <><circle cx="8" cy="8" r="8" fill="#f89818" /><path d="M8 12a4 4 0 114-4v4" stroke="#fff" strokeWidth="2" fill="none" /></>,
  },
  {
    name: "TeamViewer",
    icon: <><path d="M1 0l12 1v12L1 14z" fill="#1888d8" /><circle cx="7" cy="7" r="5" fill="#fff" /><path d="M3 7l3-2v1h2V5l3 2-3 2V8H6v1z" fill="#1068b8" /><path d="M7 12h8v3H7z" fill="#40e020" /></>,
  },
  {
    name: "Nuage",
    icon: <><path d="M2 13q-3-3 1-5 1-6 6-6 4 0 5 5 4 3 0 6z" fill="#a4a4a4" /><path d="M6 13q-3-4 2-5 2-4 6 0" stroke="#686868" fill="none" /></>,
  },
  {
    name: "Réglages",
    icon: <><path d="M0 0h16v16H0z" fill="#2898d8" /><path d="M3 3h9v6H3zM6 7h8v6H6z" stroke="#c0e4fc" fill="none" /><path d="M0 11q6 0 7 5H0z" fill="#e8c848" /></>,
  },
  {
    name: "CCleaner",
    icon: <><path d="M14 4A6 6 0 1014 13" stroke="#c82820" strokeWidth="3.500" fill="none" /><path d="M12 1L6 9" stroke="#3868b8" strokeWidth="3" /><path d="M0 12l6-5 4 4-5 5z" fill="#ecd0a8" /></>,
  },
  {
    name: "USB",
    icon: <><path d="M4 5h7v10H4zM5 5V1h5v4" stroke="#eee" fill="none" /><path d="M6 3h1M8 3h1" stroke="#eee" /><path d="M9 12l2 2 4-4" stroke="#bbb" strokeWidth="1.500" fill="none" /></>,
  },
  {
    name: "Pavé tactile",
    icon: <><path d="M1 1h14v10H1z" fill="#808080" stroke="#000" /><path d="M1 13h6v2H1zM9 13h6v2H9z" fill="#a0a0a0" /></>,
  },
];

const taskIcons: { name: string; state?: "open" | "active"; icon: ReactNode }[] = [
  {
    name: "Edge",
    icon: <svg viewBox="0 0 24 24" className="h-6 w-6"><path d="M2 11Q4 1 13 1q9 1 9 10v3H9q1 5 6 5 4 0 6-2v5q-3 2-7 2-9-1-10-9 0-5 5-8-4 1-7 4zm7-1h7q0-4-3-4-4 0-4 4z" fill="#0c7cdc" fillRule="evenodd" /></svg>,
  },
  {
    name: "Explorateur",
    state: "open",
    icon: <svg viewBox="0 0 24 22" className="h-[22px] w-6"><path d="M1 2h9l2 2h10v16H1z" fill="#f8d878" /><path d="M1 7h21v13H1z" fill="#ffe8a0" /><path d="M5 20v-8h14v8h-4v-4H9v4z" fill="#38a8e0" /></svg>,
  },
  {
    name: "Store",
    icon: <svg viewBox="0 0 24 26" className="h-[26px] w-6"><path d="M7 8q0-6 5-6t5 6M10 7q1-5 6-4" stroke="#fff" strokeWidth="1.500" fill="none" /><path d="M2 8l19-1v17L2 22z" fill="#fff" /><path d="M6 11l4-.500v4H6zm5-.500l6-.500v5h-6zM6 15.500h4v4L6 19zm5 0h6v5l-6-.800z" fill="#202020" /></svg>,
  },
  {
    name: "Photoshop",
    icon: <svg viewBox="0 0 22 22" className="h-[22px] w-[22px]"><path d="M0 0h22v22H0z" fill="#0e4c80" /><path d="M1 1h20v10H1z" fill="#1468a4" /><text x="4" y="15" className="font-[Open_Sans] text-[11px] font-bold" fill="#78d0ff">Ps</text></svg>,
  },
  {
    name: "Film",
    icon: <svg viewBox="0 0 24 24" className="h-6 w-6"><path d="M0 0h24v24H0z" fill="#d8dcf4" /><path d="M3 1h4v22H3zM17 1h4v22h-4z" fill="#303c60" /><path d="M7 1h10v10H7z" fill="#d4e6fa" /><path d="M7 13h10v9H7z" fill="#78b0e0" /><path d="M5 2v20M19 2v20" stroke="#c8d0e8" strokeWidth="1.500" strokeDasharray="2 2" /><path d="M6 12h12" stroke="#303c60" strokeWidth="2" /></svg>,
  },
  { name: "Gem", state: "open", icon: <Gem className="h-6 w-6" /> },
  {
    name: "Firefox",
    state: "open",
    icon: <svg viewBox="0 0 24 24" className="h-6 w-6"><circle cx="12" cy="12" r="11" fill="#e86818" /><circle cx="13" cy="9" r="8" fill="#2070b8" /><path d="M8 3q6-3 10 2l-5-1z" fill="#70c0e8" /><path d="M2 6l2-2q3 0 5 3l4 1-3 3q1 4 6 3 5-1 5-8 3 7-1 12-6 6-13 2Q0 15 2 6z" fill="#f08c20" /><path d="M20 4q5 9-2 15-5 3-9 0 9 0 11-15z" fill="#ffcc40" /></svg>,
  },
  { name: "Prism", state: "active", icon: <PrismLogo id="logo-task" className="h-[22px] w-6" /> },
];

function Tray() {
  return (
    <div className="absolute right-[126px] bottom-10 grid w-[162px] grid-cols-4 border border-b-0 border-[#3c3c3c] bg-linear-to-b from-[#212121] via-[#222222] via-45% to-[#4a4b4d]">
      {trayIcons.map((t) => (
        <button key={t.name} aria-label={t.name} className="flex h-10 items-center justify-center">
          <svg viewBox="0 0 16 16" className="h-4 w-4" aria-hidden="true">{t.icon}</svg>
        </button>
      ))}
    </div>
  );
}

function Taskbar() {
  return (
    <footer className="flex h-10 shrink-0 items-center bg-[#202020] font-[Open_Sans] text-white">
      <button aria-label="Démarrer" className="flex h-10 w-12 items-center justify-center">
        <svg viewBox="0 0 16 16" className="h-4 w-4" fill="#fff" aria-hidden="true">
          <path d="M0 2l6.500-1v6.500H0zM7.500 1L16 0v7.500H7.500zM0 8.500h6.500V15L0 14zM7.500 8.500H16V16l-8.500-1z" />
        </svg>
      </button>
      <label className="flex h-10 w-[344px] items-center gap-1 bg-[#333333] pr-3.5 pl-2">
        <svg viewBox="0 0 24 24" className="h-6 w-6 shrink-0" fill="none" aria-hidden="true">
          <circle cx="12" cy="12" r="9.500" stroke="#fff" strokeWidth="2.500" />
        </svg>
        <input aria-label="Recherche" placeholder="Posez-moi une question." className="min-w-0 flex-1 bg-transparent text-sm placeholder-[#9a9a9a]" />
        <svg viewBox="0 0 14 20" className="h-5 w-3.5 shrink-0" fill="none" stroke="#a0a0a0" aria-hidden="true">
          <path d="M4.500 2.500h5v10h-5zM2.500 9v6h9V9M7 15v3M4 17.500h6" />
        </svg>
      </label>
      <button aria-label="Vue des tâches" className="flex h-10 w-12 items-center justify-center">
        <svg viewBox="0 0 22 16" className="h-4 w-[22px]" fill="none" stroke="#fff" aria-hidden="true">
          <path d="M5.500 1.500h11v13h-11zM3 3.500H1.500v9H3M19 3.500h1.500v9H19" />
        </svg>
      </button>
      <div className="mr-3 ml-1.5 h-4 w-1 border-x border-[#555]" />
      {taskIcons.map((t) => (
        <button key={t.name} aria-label={t.name} className={`relative flex h-10 w-[49px] items-center justify-center ${t.state === "active" ? "bg-[#4b4b4b]" : ""}`}>
          {t.icon}
          {t.state && <span className={`absolute bottom-0 h-0.5 bg-[#76b9ed] ${t.state === "active" ? "inset-x-0" : "inset-x-1"}`} />}
        </button>
      ))}
      <div className="ml-auto flex h-10 items-center">
        <div className="h-4 w-1 border-x border-[#555]" />
        <span className="ml-2.5 text-[11px]">Bureau</span>
        <span className="ml-2.5 self-start text-sm leading-[18px] font-bold">»</span>
        <svg viewBox="0 0 12 8" className="ml-3 h-2 w-3" fill="none" stroke="#fff" strokeWidth="1.500" aria-hidden="true">
          <path d="M1 7l5-5 5 5" />
        </svg>
        <svg viewBox="0 0 16 12" className="ml-2.5 h-3 w-4" fill="none" stroke="#fff" aria-hidden="true">
          <path d="M1 1.500h12.500v9H1zM15 4v4" strokeWidth="1.300" /><path d="M3 4h4v4H3z" fill="#fff" />
        </svg>
        <svg viewBox="0 0 14 14" className="ml-2.5 h-3.5 w-3.5" fill="none" stroke="#ccc" strokeWidth="1.300" aria-hidden="true">
          <path d="M1 12Q2 3 12 2M4 13q1-7 9-8M7 13q1-4 6-5" /><circle cx="11" cy="12" r="1.300" fill="#fff" />
        </svg>
        <svg viewBox="0 0 18 14" className="ml-2 h-3.5 w-[18px]" fill="none" stroke="#fff" strokeWidth="1.200" aria-hidden="true">
          <path d="M1 5h2.500L7 2v10L3.500 9H1zM9.500 5q1.500 2 0 4M12 3q3 4 0 8M14.500 1q4.500 6 0 12" />
        </svg>
        <div className="ml-2 flex w-[60px] flex-col items-center text-[11px] leading-[18px]">
          <span>18:00</span>
          <span>25/11/2016</span>
        </div>
        <svg viewBox="0 0 18 18" className="mr-[19px] ml-4 h-[18px] w-[18px]" fill="none" stroke="#fff" strokeWidth="1.300" aria-hidden="true">
          <path d="M1.500 1.500h15v12H12l-3 3v-3H1.500z" />
        </svg>
        <div className="mr-1 h-10 w-px bg-[#666]" />
      </div>
    </footer>
  );
}

export default function App() {
  return (
    <div className="relative flex h-screen w-full flex-col overflow-hidden bg-[#e3e4e9] font-[Open_Sans]">
      <header className="relative flex h-5 shrink-0 items-center bg-linear-to-b from-[#2e3763] via-[#1f2858] via-20% to-[#46609f]">
        <StarField id="stars-main" x={0} y={0} />
        <PrismLogo id="logo-main" className="relative ml-1 h-4 w-5" />
        <h1 className="relative flex-1 text-center text-xs font-bold whitespace-pre text-[#68719a]">PRISM - Version "Light"  10.1.18.190</h1>
        <div className="relative mr-3 mb-1 flex gap-2">
          <WinButton kind="min" />
          <WinButton kind="max" />
          <WinButton kind="close" />
        </div>
      </header>

      <nav className="flex h-5 shrink-0 items-center gap-px bg-linear-to-b from-[#f0f0f4] to-[#e0e1e8] font-[Roboto] text-xs text-black">
        {menus.map((m) => (
          <button
            key={m}
            className={`h-5 px-1 leading-5 whitespace-nowrap ${m === "Traitements" ? "bg-linear-to-b from-[#8098cc] to-[#5068a0] text-white" : ""}`}
          >
            {m}
          </button>
        ))}
      </nav>

      <div className="flex h-[39px] shrink-0 gap-px border-t border-white bg-linear-to-b from-[#ececea] to-[#e3e4e9]">
        {mainTools.map((group, i) => (
          <React.Fragment key={i}>
            {i > 0 && <Sep wide={i > 4} />}
            {group.map((t) => (
              <ToolButton key={t.name} name={t.name} icon={t.icon} />
            ))}
          </React.Fragment>
        ))}
      </div>

      <MapWindow />
      <Taskbar />
      <Dialog />
      <Tray />
    </div>
  );
}
